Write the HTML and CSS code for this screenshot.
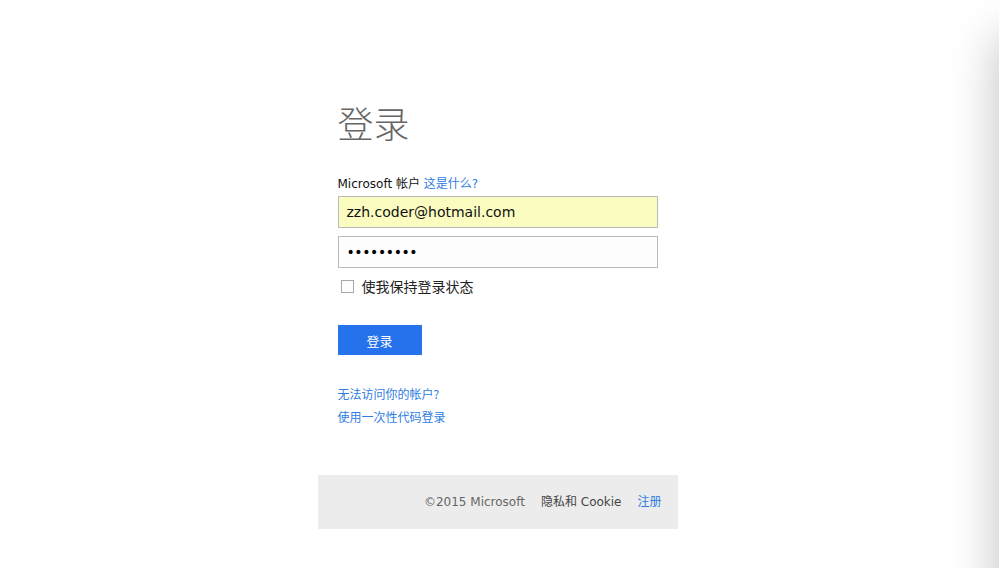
FILE: index.html
```html
<!DOCTYPE html>
<html lang="zh-CN">
<head>
<meta charset="utf-8">
<title>登录</title>
<link rel="stylesheet" href="styles.css">
</head>
<body>
<div class="page">
  <main class="signin">
    <h1 class="title">登录</h1>
    <div class="label">Microsoft 帐户 <a class="link" href="#">这是什么?</a></div>
    <div class="field autofill">zzh.coder@hotmail.com</div>
    <div class="field password">•••••••••</div>
    <label class="keep"><span class="box"></span><span>使我保持登录状态</span></label>
    <button class="btn">登录</button>
    <div class="links">
      <a class="link" href="#">无法访问你的帐户?</a>
      <a class="link" href="#">使用一次性代码登录</a>
    </div>
  </main>
  <footer class="footer">
    <div class="footer-inner">
      <span class="copy">©2015 Microsoft</span>
      <span class="privacy">隐私和 Cookie</span>
      <a class="link" href="#">注册</a>
    </div>
  </footer>
</div>
<div class="edge-shadow"></div>
</body>
</html>
```
FILE: styles.css
```css
html, body {
  margin: 0;
  padding: 0;
  background: #fff;
  height: 100%;
  overflow: hidden;
  font-family: "DejaVu Sans", "Noto Sans CJK SC", sans-serif;
}
.page {
  width: 360px;
  margin: 0 auto;
  padding-top: 96px;
  position: relative;
  left: -2px;
}
.signin {
  padding: 0 20px;
  display: flex;
  flex-direction: column;
  align-items: flex-start;
}
.title {
  margin: 0;
  font-family: "Noto Sans CJK SC", sans-serif;
  font-weight: 300;
  font-size: 36px;
  line-height: 52px;
  color: #666;
}
.label {
  margin-top: 28px;
  font-size: 12px;
  line-height: 16px;
  color: #111;
}
.link {
  color: #2f7de1;
  text-decoration: none;
}
.field {
  box-sizing: border-box;
  width: 320px;
  height: 32px;
  border: 1px solid #bababa;
  background: #fdfdfd;
  padding: 0 8px;
  font-size: 14px;
  line-height: 30px;
  color: #111;
  margin-top: 8px;
}
.field.autofill {
  background: #fafdbf;
  margin-top: 4px;
}
.field.password {
  font-size: 14px;
  letter-spacing: -0.4px;
  color: #000;
}
.keep {
  display: flex;
  align-items: center;
  gap: 8px;
  margin-top: 9px;
  margin-left: 3px;
  font-family: "Noto Sans CJK SC", sans-serif;
  font-size: 14px;
  line-height: 18px;
  color: #222;
}
.box {
  width: 11px;
  height: 11px;
  border: 1px solid #a8a8a8;
  background: #fff;
}
.btn {
  margin-top: 30px;
  width: 84px;
  height: 30px;
  border: 0;
  background: #2672ec;
  color: #fff;
  font-family: "Noto Sans CJK SC", sans-serif;
  font-size: 13px;
  padding: 0;
}
.links {
  margin-top: 30px;
  display: flex;
  flex-direction: column;
  gap: 6px;
  font-family: "Noto Sans CJK SC", sans-serif;
  font-size: 12px;
  line-height: 17px;
}
.footer {
  margin-top: 50px;
  height: 54px;
  background: #ececec;
  display: flex;
  justify-content: flex-end;
  align-items: center;
  padding-right: 16px;
  font-size: 12px;
  color: #666;
}
.footer-inner {
  display: flex;
  align-items: baseline;
  gap: 16px;
  line-height: 18px;
}
.privacy {
  color: #444;
}
.edge-shadow {
  position: fixed;
  top: 40px;
  bottom: -80px;
  left: 999px;
  width: 100px;
  box-shadow: 0 0 45px 4px rgba(0, 0, 0, 0.22);
}
```
